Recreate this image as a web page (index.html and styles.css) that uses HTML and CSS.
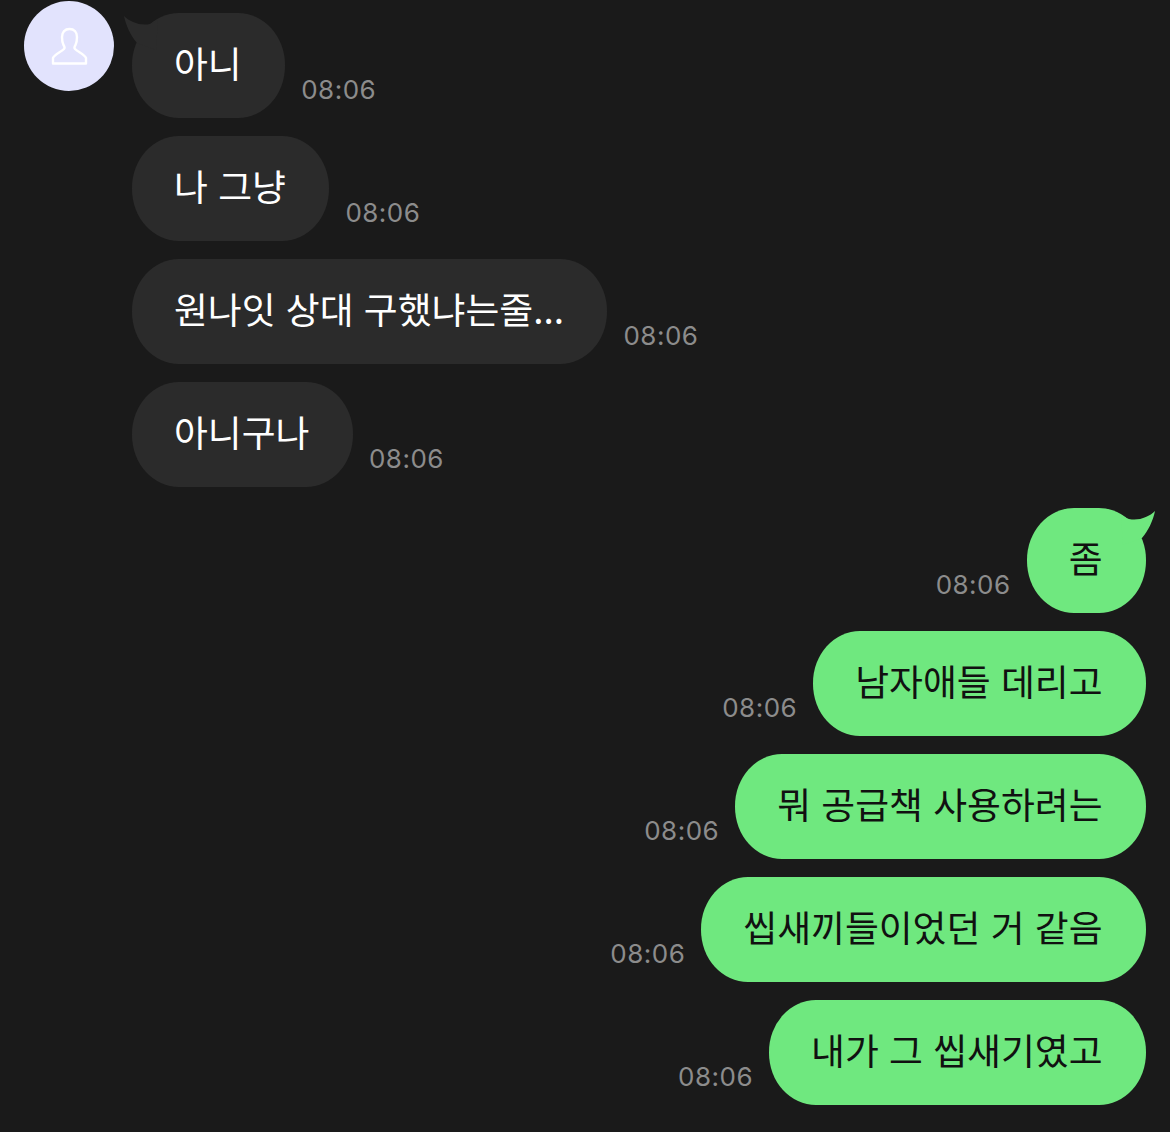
FILE: index.html

```html
<!DOCTYPE html>
<html lang="ko">
<head>
  <meta charset="UTF-8" />
  <title>채팅</title>
  <link rel="stylesheet" href="styles.css">
</head>
<body>
  <div class="incoming">
    <div class="avatar">
      <svg width="37" height="38" viewBox="0 0 37 38" fill="none" stroke="#fff" stroke-width="2.4" stroke-linejoin="round">
        <path d="M2 36.500 V31 C3.500 27 10 25 13 22 C14 21 13.500 19.500 12.500 18 C11.500 16 11 13.500 11 10 C11 5 14 2 18.500 2 C23 2 26 5 26 10 C26 13.500 25.500 16 24.500 18 C23.500 19.500 23 21 24 22 C27 25 33.500 27 35 31 V36.500 Z"/>
      </svg>
    </div>
    <div class="messages">
      <div class="row">
        <div class="bubble first">
          <svg class="tail" width="36" height="34" viewBox="0 0 36 34"><path d="M0 0 C6 6 16 10 26 8 C29 7 31 6 34 4 L32 34 L13 27 C7 20 2 10 0 0 Z"/></svg>
          아니
        </div>
        <span class="time">08:06</span>
      </div>
      <div class="row"><div class="bubble">나 그냥</div><span class="time">08:06</span></div>
      <div class="row"><div class="bubble">원나잇 상대 구했냐는줄...</div><span class="time">08:06</span></div>
      <div class="row"><div class="bubble">아니구나</div><span class="time">08:06</span></div>
    </div>
  </div>

  <div class="outgoing">
    <div class="row">
      <span class="time">08:06</span>
      <div class="bubble first">
        <svg class="tail" width="36" height="34" viewBox="-4 0 36 34"><path d="M32 0 C26 6 16 10 6 8 C3 7 1 6 -2 4 L0 34 L19 27 C25 20 30 10 32 0 Z"/></svg>
        좀
      </div>
    </div>
    <div class="row"><span class="time">08:06</span><div class="bubble">남자애들 데리고</div></div>
    <div class="row"><span class="time">08:06</span><div class="bubble">뭐 공급책 사용하려는</div></div>
    <div class="row"><span class="time">08:06</span><div class="bubble">씹새끼들이었던 거 같음</div></div>
    <div class="row"><span class="time">08:06</span><div class="bubble">내가 그 씹새기였고</div></div>
  </div>
</body>
</html>
```

FILE: styles.css

```css
body {
  margin: 0;
  height: 1132px;
  overflow: hidden;
  padding: 1px 24px 0 24px;
  box-sizing: border-box;
  background: #1a1a1a;
  font-family: "Noto Sans CJK KR", "Noto Sans", sans-serif;
}
.incoming {
  display: flex;
  gap: 18px;
}
.avatar {
  width: 90px;
  height: 90px;
  border-radius: 50%;
  background: #e2e3fd;
  display: flex;
  align-items: center;
  justify-content: center;
  flex-shrink: 0;
}
.messages {
  display: flex;
  flex-direction: column;
  gap: 18px;
  padding-top: 12px;
}
.outgoing {
  display: flex;
  flex-direction: column;
  gap: 18px;
  margin-top: 21px;
}
.row {
  display: flex;
  align-items: flex-end;
  gap: 16px;
}
.outgoing .row {
  justify-content: flex-end;
}
.bubble {
  position: relative;
  height: 105px;
  box-sizing: border-box;
  padding: 0 43.5px 7px 42px;
  border-radius: 47px / 52px;
  display: flex;
  align-items: center;
  font-size: 36.8px;
  font-weight: 400;
  white-space: nowrap;
}
.incoming .bubble {
  background: #2b2b2b;
  color: #fff;
}
.outgoing .bubble {
  background: #6fe87f;
  color: #111;
}
.tail {
  position: absolute;
  top: 3px;
}
.incoming .tail {
  left: -8px;
  fill: #2b2b2b;
}
.outgoing .tail {
  right: -9px;
  fill: #6fe87f;
}
.time {
  font-family: Inter, "Liberation Sans", sans-serif;
  font-size: 26px;
  letter-spacing: 0.5px;
  line-height: 30px;
  margin-bottom: 13px;
  color: #8c8c8c;
}
```
